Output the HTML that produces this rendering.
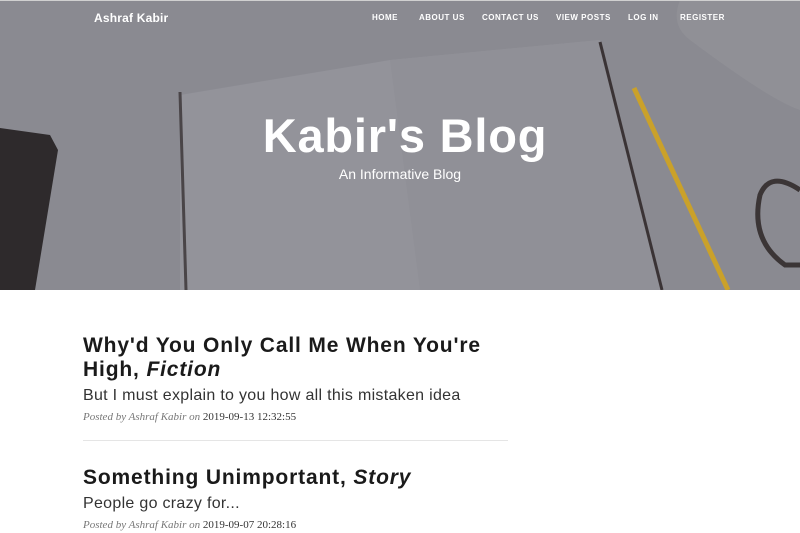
<!DOCTYPE html>
<html><head><meta charset="utf-8"><style>
*{margin:0;padding:0;box-sizing:border-box}
body{width:800px;height:533px;overflow:hidden;background:#fff;font-family:"Liberation Sans",sans-serif;position:relative}
.hero{position:absolute;left:0;top:0;width:800px;height:290px;background:#8a8a91;overflow:hidden}
.hero .topline{position:absolute;top:0;left:0;width:800px;height:1px;background:#d0d0d0}
.nav a{position:absolute;top:13px;color:#fff;font-weight:bold;font-size:8px;letter-spacing:.5px;text-decoration:none}
.brand{position:absolute;left:94px;top:11px;color:#fff;font-weight:bold;font-size:12px;letter-spacing:.2px}
h1{position:absolute;top:108px;width:800px;text-align:center;color:#fff;font-size:47px;font-weight:bold;letter-spacing:.8px;padding-left:10px}
.sub{position:absolute;top:166px;width:800px;text-align:center;color:#fff;font-size:14px;font-weight:300}
.post{position:absolute;left:83px;width:430px}
.post h2{font-size:21px;font-weight:bold;color:#1a1a1a;line-height:24px;letter-spacing:.85px}
.post h3{font-size:16px;font-weight:normal;color:#333;margin-top:5px;letter-spacing:.3px}
.meta{font-family:"Liberation Serif",serif;font-style:italic;color:#777;font-size:11px;margin-top:6px}
.meta span{font-style:normal;color:#333}
hr{position:absolute;left:83px;top:440px;width:425px;border:0;border-top:1px solid #e5e5e5}
</style></head><body>
<div class="hero">
<svg width="800" height="290" style="position:absolute;left:0;top:0">
<polygon points="180,95 390,60 600,40 660,290 180,290" fill="#93939a"/>
<polygon points="390,60 600,40 660,290 420,290" fill="#909097"/>
<line x1="600" y1="42" x2="662" y2="290" stroke="#3a3335" stroke-width="3"/>
<line x1="180" y1="92" x2="186" y2="290" stroke="#4a4548" stroke-width="3"/>
<polygon points="0,128 50,135 58,150 35,290 0,290" fill="#2e2a2c"/>
<line x1="634" y1="88" x2="728" y2="290" stroke="#caa12a" stroke-width="5"/>
<path d="M680,0 L800,0 L800,110 Q770,100 690,40 Q670,25 680,0Z" fill="#909096"/>
<path d="M800,190 Q770,170 760,195 Q750,240 785,265 L800,265" fill="none" stroke="#3b3536" stroke-width="5"/>
</svg>
<div class="topline"></div>
<div class="brand">Ashraf Kabir</div>
<div class="nav">
<a style="left:372px">HOME</a><a style="left:419px">ABOUT US</a><a style="left:482px">CONTACT US</a><a style="left:556px">VIEW POSTS</a><a style="left:628px">LOG IN</a><a style="left:680px">REGISTER</a>
</div>
<h1>Kabir's Blog</h1>
<div class="sub">An Informative Blog</div>
</div>
<div class="post" style="top:334px">
<h2>Why'd You Only Call Me When You're High, <i>Fiction</i></h2>
<h3>But I must explain to you how all this mistaken idea</h3>
<div class="meta">Posted by Ashraf Kabir on <span>2019-09-13 12:32:55</span></div>
</div>
<hr>
<div class="post" style="top:466px">
<h2>Something Unimportant, <i>Story</i></h2>
<h3>People go crazy for...</h3>
<div class="meta">Posted by Ashraf Kabir on <span>2019-09-07 20:28:16</span></div>
</div>
</body></html>
